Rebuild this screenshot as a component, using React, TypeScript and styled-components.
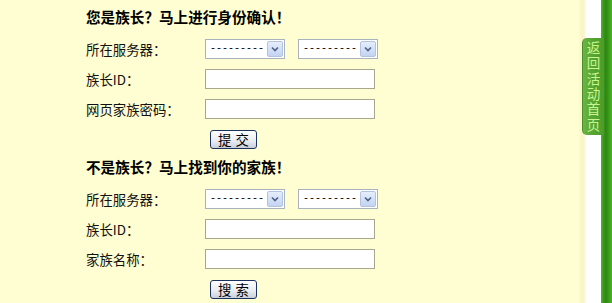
import React from "react";
import styled, { createGlobalStyle } from "styled-components";

const Global = createGlobalStyle`
  html, body { margin: 0; padding: 0; background: #fffed2; }
  body { font-family: "Liberation Sans", "Noto Sans CJK SC", sans-serif; }
`;

const Page = styled.div`
  display: flex;
  width: 612px;
  height: 303px;
  overflow: hidden;
  position: relative;
  background: #fffed2;
`;

const Main = styled.div`
  flex: 1;
  padding: 7px 0 0 86px;
  display: flex;
  flex-direction: column;
`;

const Section = styled.div<{ $top: number }>`
  display: grid;
  grid-template-columns: 119px auto;
  grid-auto-rows: auto;
  align-items: center;
  margin-top: ${(p) => p.$top}px;
`;

const Title = styled.div`
  grid-column: 1 / 3;
  font-family: "Noto Sans CJK SC", sans-serif;
  font-weight: 700;
  font-size: 14.6px;
  line-height: 20px;
  height: 20px;
  color: #000;
  margin-bottom: 7px;
  white-space: nowrap;
`;

const Label = styled.div`
  font-family: "Noto Sans CJK SC", sans-serif;
  font-size: 13.4px;
  line-height: 20px;
  color: #111;
  height: 30px;
  display: flex;
  align-items: center;
  white-space: nowrap;
`;

const Field = styled.div`
  height: 30px;
  display: flex;
  align-items: center;
  gap: 13px;
`;

const SelectBox = styled.div`
  box-sizing: border-box;
  width: 80px;
  height: 20px;
  border: 1px solid #a9b3bd;
  background: #fff;
  display: flex;
  align-items: center;
  justify-content: space-between;
  padding: 1px;
  overflow: hidden;
`;

const SelectText = styled.span`
  font-family: "Liberation Mono", monospace;
  font-size: 10px;
  line-height: 16px;
  white-space: nowrap;
  color: #000;
  padding-left: 3px;
`;

const Arrow = styled.span`
  box-sizing: border-box;
  flex: none;
  width: 16px;
  height: 16px;
  border: 1px solid #b4c3dc;
  border-radius: 2px;
  background: linear-gradient(#e6eefc, #c3d3f3);
  display: flex;
  align-items: center;
  justify-content: center;
`;

const TextInput = styled.div`
  box-sizing: border-box;
  width: 170px;
  height: 20px;
  border: 1px solid #a6a88e;
  background: #fff;
`;

const ButtonCell = styled.div`
  grid-column: 2;
  height: 30px;
  display: flex;
  align-items: center;
  padding-left: 5px;
`;

const Button = styled.div`
  box-sizing: border-box;
  width: 47px;
  height: 19px;
  border: 1px solid #1c3260;
  border-radius: 3px;
  background: linear-gradient(#ffffff, #e8ebf0 60%, #c9d0dc);
  font-family: "Noto Sans CJK SC", sans-serif;
  font-size: 13.4px;
  line-height: 17px;
  text-align: center;
  letter-spacing: 4px;
  padding-left: 4px;
  color: #000;
  white-space: nowrap;
`;

const Side = styled.div`
  display: flex;
  width: 34px;
`;

const Fade = styled.div`
  width: 9px;
  background: linear-gradient(to right, #fffed2, #f6f3c2 55%, #ffffff);
`;

const White = styled.div`
  width: 14px;
  background: #fff;
`;

const GreenBar = styled.div`
  width: 11px;
  background: linear-gradient(to right, #55b52f, #3c9a1c 20%, #2f8612 45%, #3a9b1a 70%, #4ab12a);
`;

const Tab = styled.a`
  position: absolute;
  left: 582px;
  top: 38px;
  width: 22px;
  height: 97px;
  box-sizing: border-box;
  border-radius: 5px 0 0 5px;
  background: linear-gradient(to right, #6bb543, #58a734 40%, #4b9c2a);
  border-left: 1px solid #4a8f2c;
  display: flex;
  justify-content: center;
  padding-top: 3px;
  text-decoration: none;
  overflow: hidden;
`;

const TabText = styled.span`
  writing-mode: vertical-rl;
  text-orientation: upright;
  white-space: nowrap;
  font-family: "Noto Sans CJK SC", sans-serif;
  font-size: 13.5px;
  letter-spacing: 1.9px;
  line-height: 20px;
  color: #c8f58e;
`;

const Chevron = () => (
  <svg width="8" height="6" viewBox="0 0 8 6">
    <path d="M1 1.5 L4 4.5 L7 1.5" fill="none" stroke="#4d6185" strokeWidth="1.6" />
  </svg>
);

const Select = () => (
  <SelectBox>
    <SelectText>---------</SelectText>
    <Arrow>
      <Chevron />
    </Arrow>
  </SelectBox>
);

type Props = { title: string; third: string; btn: string; top: number };

const FormSection = ({ title, third, btn, top }: Props) => (
  <Section $top={top}>
    <Title>{title}</Title>
    <Label>所在服务器：</Label>
    <Field>
      <Select />
      <Select />
    </Field>
    <Label>族长ID：</Label>
    <Field>
      <TextInput />
    </Field>
    <Label>{third}</Label>
    <Field>
      <TextInput />
    </Field>
    <ButtonCell>
      <Button>{btn}</Button>
    </ButtonCell>
  </Section>
);

export default function App() {
  return (
    <>
      <Global />
      <Page>
        <Main>
          <FormSection title="您是族长？马上进行身份确认！" third="网页家族密码：" btn="提交" top={0} />
          <FormSection title="不是族长？马上找到你的家族！" third="家族名称：" btn="搜索" top={3} />
        </Main>
        <Side>
          <Fade />
          <White />
          <GreenBar />
        </Side>
        <Tab href="#">
          <TabText>返回活动首页</TabText>
        </Tab>
      </Page>
    </>
  );
}
